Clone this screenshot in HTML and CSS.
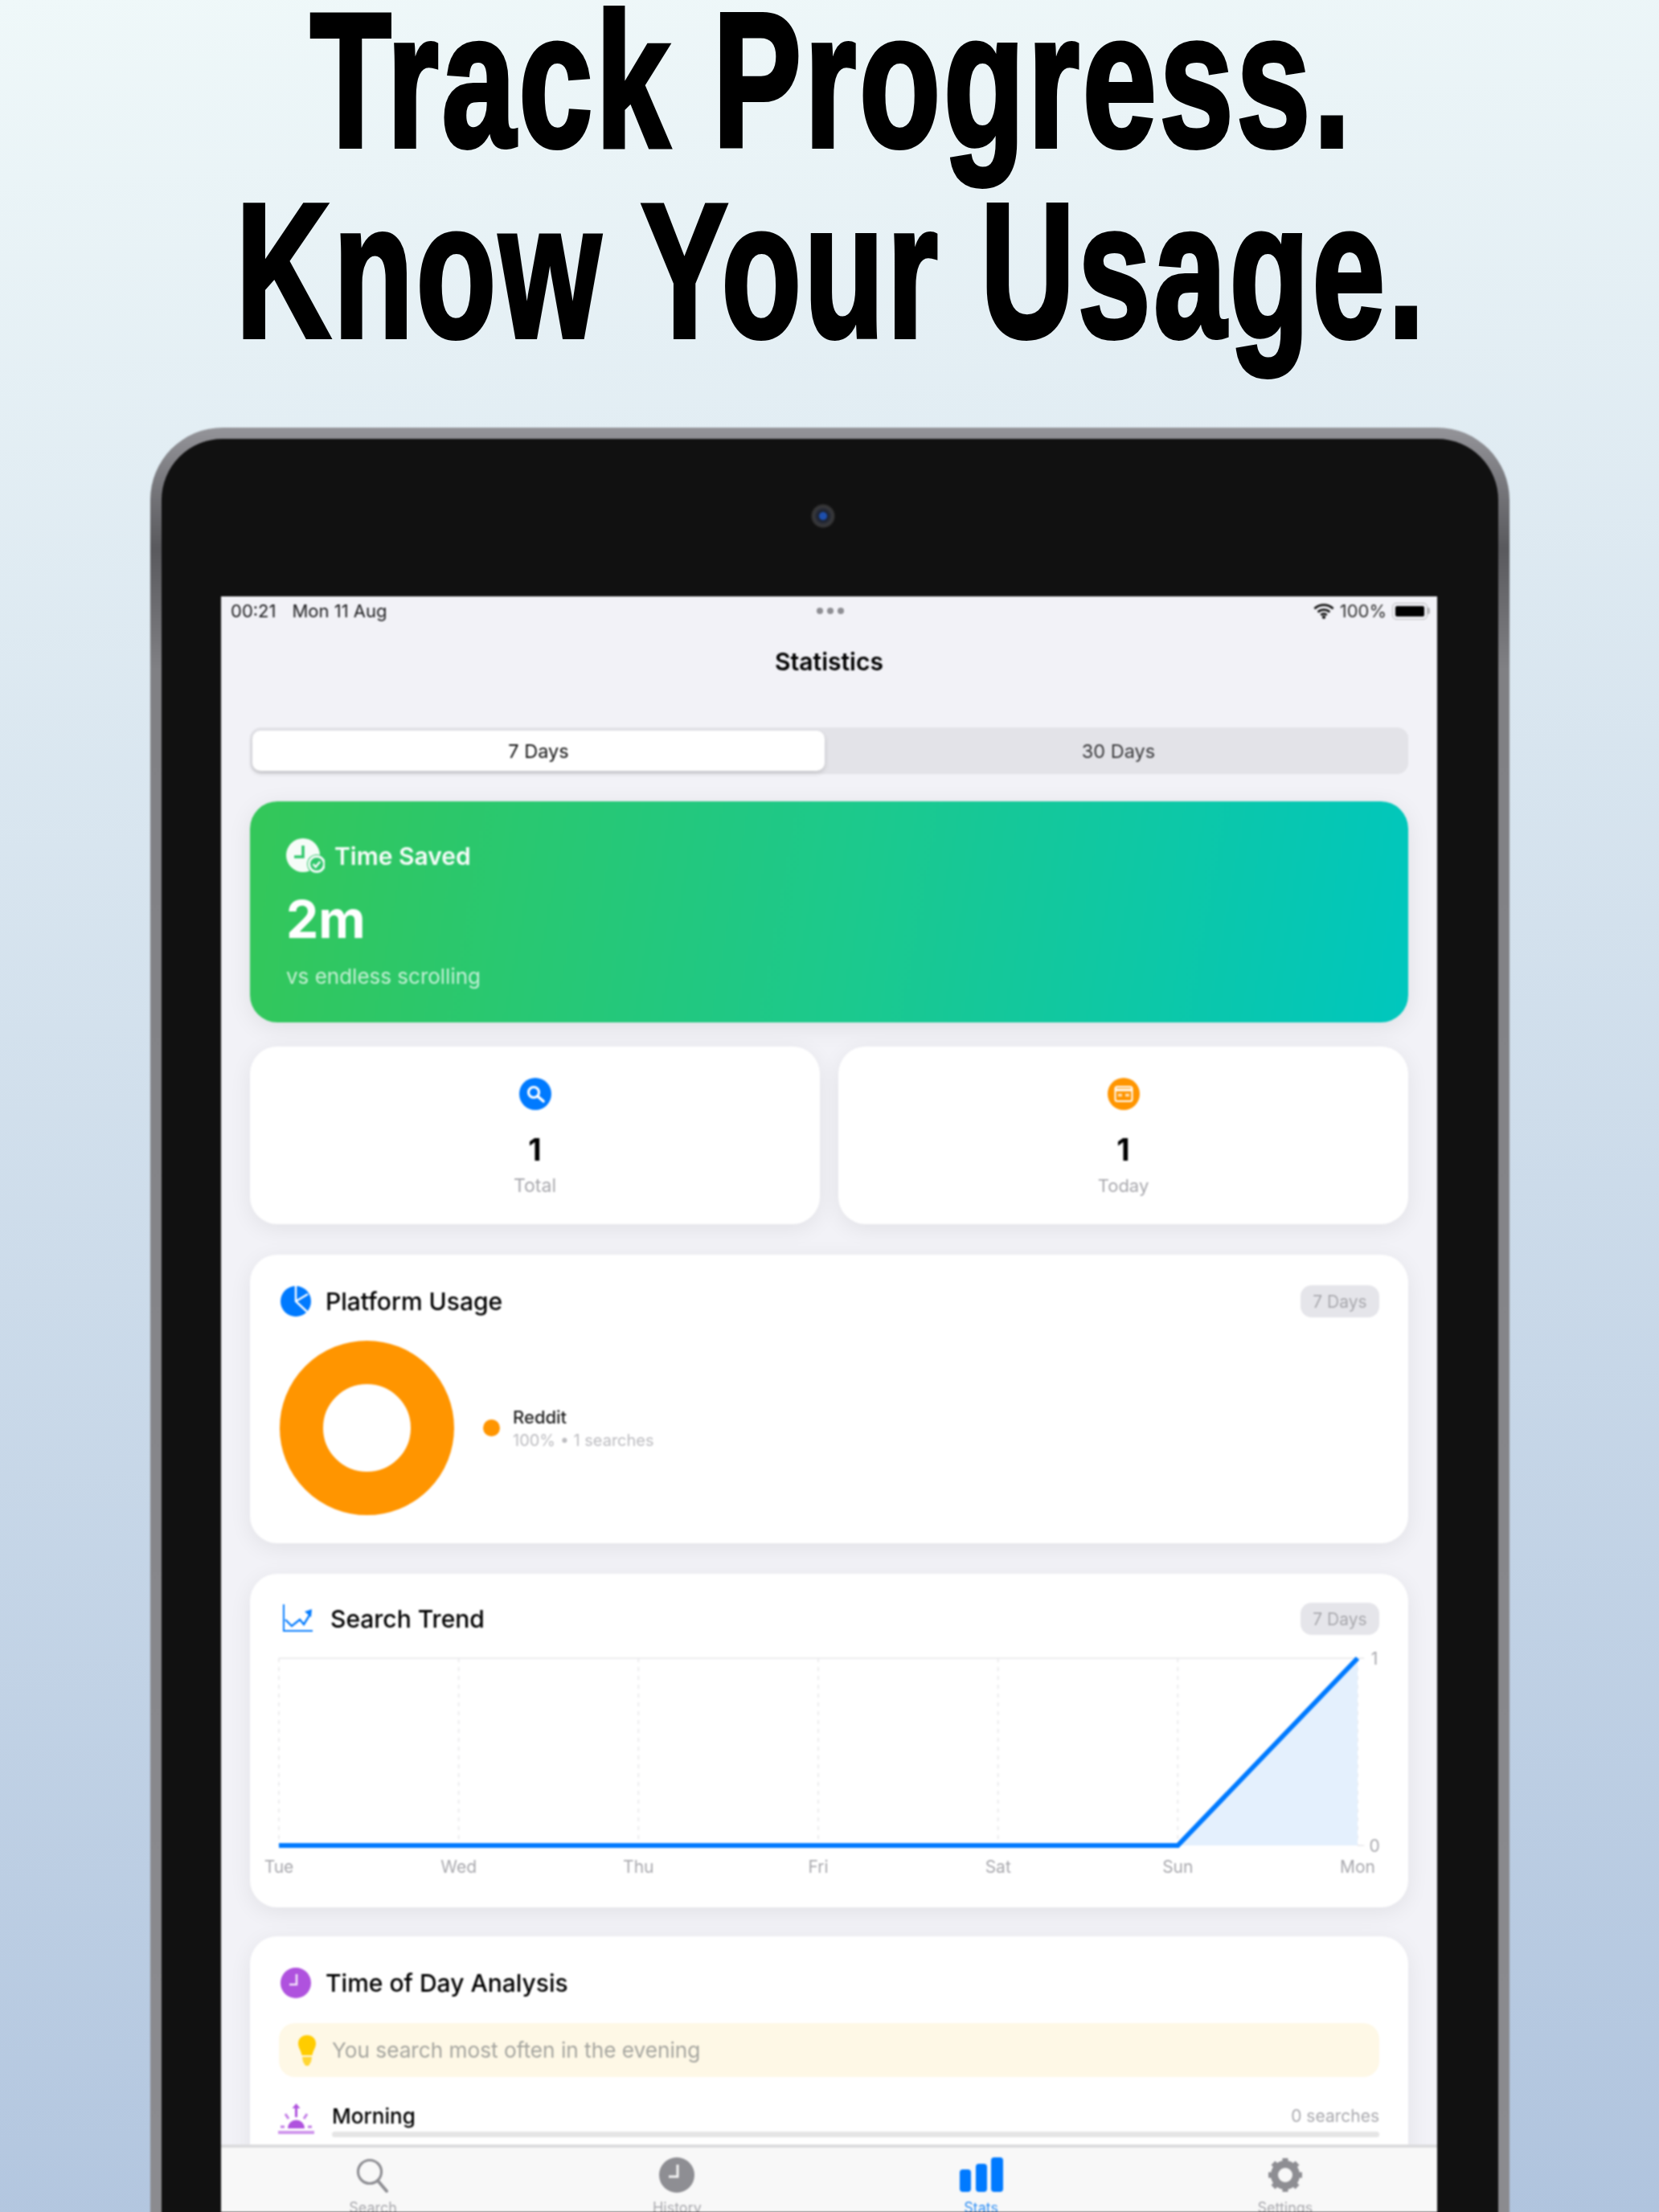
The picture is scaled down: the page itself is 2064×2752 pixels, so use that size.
FILE: index.html
```html
<!DOCTYPE html>
<html lang="en">
<head>
<meta charset="utf-8">
<title>Track Progress. Know Your Usage.</title>
<link rel="stylesheet" href="styles.css">
</head>
<body>
<main class="page">
  <h1 class="headline">
    <span class="line line-one">Track Progress.</span>
    <span class="line line-two">Know Your Usage.</span>
  </h1>
  <div class="device">
    <div class="bezel">
      <div class="camera"></div>
      <div class="screen">
        <div class="status">
          <div class="status-side"><span>00:21</span><span>Mon 11 Aug</span></div>
          <div class="dots"><i></i><i></i><i></i></div>
          <div class="status-side status-right">
            <svg class="wifi" viewBox="0 0 24 18"><path d="M1 6a16 16 0 0 1 22 0M5 10a10.500 10.500 0 0 1 14 0M8.500 13.500a5 5 0 0 1 7 0" fill="none" stroke="#111" stroke-width="2.600"/><circle cx="12" cy="16" r="2" fill="#111"/></svg>
            <span class="pct">100%</span>
            <div class="battery"><div class="battery-fill"></div></div>
            <div class="battery-tip"></div>
          </div>
        </div>
        <div class="nav">Statistics</div>
        <div class="content">
          <div class="segment">
            <div class="seg seg-on">7 Days</div>
            <div class="seg seg-off">30 Days</div>
          </div>
          <section class="saved">
            <div class="saved-head">
              <svg class="saved-icon" viewBox="0 0 48 44">
                <circle cx="21" cy="21" r="21" fill="#fff"/>
                <path d="M21 9v14H10" fill="none" stroke="#2fc86c" stroke-width="3.500"/>
                <circle cx="38" cy="32" r="12" fill="#2fc86c"/>
                <circle cx="38" cy="32" r="9.500" fill="none" stroke="#fff" stroke-width="3"/>
                <path d="M33.500 32l3.200 3.500 5.500-6.500" fill="none" stroke="#fff" stroke-width="2.500"/>
              </svg>
              <span>Time Saved</span>
            </div>
            <div class="saved-value">2m</div>
            <div class="saved-sub">vs endless scrolling</div>
          </section>
          <div class="stats">
            <section class="card stat">
              <svg class="stat-icon" viewBox="0 0 40 40"><circle cx="20" cy="20" r="20" fill="#007aff"/><circle cx="18" cy="18" r="6.500" fill="none" stroke="#fff" stroke-width="3.200"/><path d="M23 23l7 6" stroke="#fff" stroke-width="3.600" stroke-linecap="round"/></svg>
              <div class="stat-value">1</div>
              <div class="stat-label">Total</div>
            </section>
            <section class="card stat">
              <svg class="stat-icon" viewBox="0 0 40 40"><circle cx="20" cy="20" r="20" fill="#ff9500"/><rect x="9.500" y="11" width="21" height="18" rx="2.500" fill="none" stroke="#fff" stroke-width="2"/><path d="M10 15h20" stroke="#fff" stroke-width="3.200"/><path d="M13 21.500h5M22 21.500h5" stroke="#ffe0b3" stroke-width="3.500"/></svg>
              <div class="stat-value">1</div>
              <div class="stat-label stat-label-today">Today</div>
            </section>
          </div>
          <section class="card platform">
            <div class="card-head">
              <div class="title-group">
                <svg class="head-icon" viewBox="0 0 38 38"><circle cx="19" cy="19" r="19" fill="#007aff"/><path d="M19 0v19l14 13M19 19l15-9" fill="none" stroke="#fff" stroke-width="2.400"/></svg>
                <h2>Platform Usage</h2>
              </div>
              <span class="pill">7 Days</span>
            </div>
            <div class="donut-row">
              <svg class="donut" viewBox="0 0 217 217"><circle cx="108.500" cy="108.500" r="81.500" fill="none" stroke="#ff9500" stroke-width="54"/></svg>
              <div class="legend-dot"></div>
              <div class="legend">
                <div class="legend-name">Reddit</div>
                <div class="legend-meta">100% • 1 searches</div>
              </div>
            </div>
          </section>
          <section class="card trend">
            <div class="card-head trend-head">
              <div class="title-group">
                <svg class="trend-icon" viewBox="0 0 38 36"><path d="M1 0v33h36" fill="none" stroke="#007aff" stroke-width="2"/><path d="M3 19l8 8 10-8 5 6 8-13" fill="none" stroke="#007aff" stroke-width="2.400"/><path d="M27 9l9-3-1 10z" fill="#007aff"/></svg>
                <h2>Search Trend</h2>
              </div>
              <span class="pill">7 Days</span>
            </div>
            <svg class="chart" viewBox="311 2050 1441 323">
              <g stroke="#ececee" stroke-width="2" fill="none">
                <path d="M347 2064H1697M1689 2297h8"/>
                <path stroke-dasharray="5 6" d="M347 2064V2297M570.700 2064V2297M794.300 2064V2297M1018 2064V2297M1241.700 2064V2297M1465.300 2064V2297M1689 2064V2297"/>
              </g>
              <path d="M1465.300 2297L1689 2064V2297Z" fill="#e4f0fd"/>
              <path d="M347 2297H1465.300L1689 2064" fill="none" stroke="#007aff" stroke-width="6"/>
              <g class="axis" text-anchor="middle">
                <text x="347" y="2331">Tue</text>
                <text x="570.700" y="2331">Wed</text>
                <text x="794.300" y="2331">Thu</text>
                <text x="1018" y="2331">Fri</text>
                <text x="1241.700" y="2331">Sat</text>
                <text x="1465.300" y="2331">Sun</text>
                <text x="1689" y="2331">Mon</text>
                <text x="1710" y="2072">1</text>
                <text x="1710" y="2305">0</text>
              </g>
            </svg>
          </section>
          <section class="card timeday">
            <div class="title-group">
              <svg class="head-icon" viewBox="0 0 38 38"><circle cx="19" cy="19" r="19" fill="#af52de"/><path d="M20 8v13H11" fill="none" stroke="#fff" stroke-opacity=".85" stroke-width="2.600"/></svg>
              <h2>Time of Day Analysis</h2>
            </div>
            <div class="insight">
              <svg class="bulb" viewBox="0 0 22 38"><path d="M11 0c6.500 0 11 4.500 11 10.500 0 5-3.500 8.500-4.500 14.500h-13C3.500 19 0 15.500 0 10.500 0 4.500 4.500 0 11 0z" fill="#ffcc00"/><path d="M5 27h12l-1 6-3 5H9l-3-5z" fill="#ffd633"/></svg>
              <span>You search most often in the evening</span>
            </div>
            <div class="slot">
              <svg class="slot-icon" viewBox="0 0 45 40"><path d="M22.500 1l-5 6h3.500v11h3V7h3.500z" fill="#af52de"/><path d="M9 14l4 6M36 14l-4 6M3 30h5M37 30h5" stroke="#c27ce6" stroke-width="3" fill="none"/><path d="M12 32a10.500 10.500 0 0 1 21 0z" fill="#af52de"/><rect x="0" y="35" width="45" height="4" fill="#cf95ec"/></svg>
              <div class="slot-body">
                <div class="slot-line"><span class="slot-name">Morning</span><span class="slot-count">0 searches</span></div>
                <div class="slot-bar"></div>
              </div>
            </div>
          </section>
        </div>
        <nav class="tabs">
          <div class="tab">
            <svg class="tab-icon" viewBox="0 0 44 44"><circle cx="18" cy="18" r="14.500" fill="none" stroke="#8e8e93" stroke-width="3.200"/><path d="M28 29l11 13" stroke="#8e8e93" stroke-width="4" stroke-linecap="round"/></svg>
            <span>Search</span>
          </div>
          <div class="tab">
            <svg class="tab-icon" viewBox="0 0 44 44"><circle cx="22" cy="22" r="22" fill="#8e8e93"/><path d="M23 9v15H12" fill="none" stroke="#f4f4f4" stroke-width="3"/></svg>
            <span>History</span>
          </div>
          <div class="tab tab-on">
            <svg class="tab-icon tab-wide" viewBox="0 0 54 44"><rect x="0" y="15" width="14" height="28" rx="4" fill="#007aff"/><rect x="20" y="8" width="14" height="35" rx="4" fill="#007aff"/><rect x="39" y="0" width="15" height="43" rx="4" fill="#007aff"/></svg>
            <span>Stats</span>
          </div>
          <div class="tab">
            <svg class="tab-icon" viewBox="0 0 44 44"><circle cx="22" cy="22" r="13.500" fill="none" stroke="#8e8e93" stroke-width="9"/><path d="M22 1v8M22 35v8M1 22h8M35 22h8M7 7l6 6M31 31l6 6M37 7l-6 6M13 31l-6 6" stroke="#8e8e93" stroke-width="7"/></svg>
            <span>Settings</span>
          </div>
        </nav>
      </div>
    </div>
  </div>
</main>
</body>
</html>
```
FILE: styles.css
```css
* { box-sizing: border-box; margin: 0; padding: 0; }
html, body { width: 2064px; height: 2752px; overflow: hidden; }
body { font-family: Inter, "Liberation Sans", sans-serif; color: #000; }
.page {
  width: 2064px; height: 2752px; overflow: hidden;
  background: linear-gradient(176deg, #eff8f9 0%, #b0c4de 100%);
}
.headline {
  height: 457px; margin: 0 -200px; padding-left: 6px;
  font: 700 238px/238px "Liberation Sans", sans-serif;
  letter-spacing: 6px;
  -webkit-text-stroke: 6px #000;
  text-align: center;
  white-space: nowrap;
  filter: blur(.7px);
}
.line { display: block; }
.line-one { transform: scaleX(.692); line-height: 200px; margin-bottom: 18px; }
.line-two { transform: scaleX(.681); }
.device {
  width: 1691px; height: 2300px; margin: 75px 0 0 187px;
  padding: 14px 14px 0;
  border-radius: 90px 90px 0 0;
  background: linear-gradient(180deg, #949499 0, #59595d 150px, #808084 300px, #8c8c90 100%);
  filter: blur(.8px);
}
.bezel {
  height: 100%; padding: 81px 75px 0 74px;
  background: #111;
  border-radius: 76px 76px 0 0;
}
.camera {
  width: 30px; height: 30px; margin: 0 0 85px 734px;
  border-radius: 50%;
  background: radial-gradient(circle, #1d4fae 0 4px, #1a2030 6px, #3a3a3c 12px, #222 15px);
}
.screen {
  width: 1513px; height: 2010px;
  display: flex; flex-direction: column;
  background: #f2f2f7; overflow: hidden;
}
.status {
  height: 36px; flex: none; padding: 0 9px 0 12px;
  display: flex; align-items: center; justify-content: space-between;
  font-size: 22px; color: #1c1c1e;
}
.status-side { display: flex; gap: 20px; align-items: center; width: 240px; }
.status-right { justify-content: flex-end; gap: 7px; }
.dots { display: flex; gap: 5px; }
.dots i { width: 8px; height: 8px; border-radius: 50%; background: #8e8e93; display: block; }
.wifi { width: 26px; height: 19px; }
.pct { font-size: 22px; color: #333; }
.battery {
  width: 44px; height: 21px; padding: 3px;
  border: 1px solid #b5b5b8; border-radius: 5px;
}
.battery-fill { height: 100%; background: #000; border-radius: 2px; }
.battery-tip { width: 3px; height: 8px; margin-left: -7px; background: #b5b5b8; border-radius: 0 2px 2px 0; }
.nav {
  height: 90px; flex: none;
  display: flex; align-items: center; justify-content: center;
  font-size: 30px; font-weight: 600;
}
.content {
  flex: 1; min-height: 0; overflow: hidden;
  padding: 37px 36px 0;
  display: flex; flex-direction: column;
}
.segment {
  height: 58px; flex: none; padding: 4px 3px;
  display: flex; background: #e3e3e8; border-radius: 14px;
  margin-bottom: 34px;
}
.seg {
  display: flex; align-items: center; justify-content: center;
  font-size: 23.5px; color: #3a3a3c;
}
.seg-on {
  width: 712px; background: #fff; border-radius: 10px; color: #111;
  box-shadow: 0 3px 6px rgba(0,0,0,.14);
}
.seg-off { flex: 1; padding-left: 8px; }
.saved {
  height: 275px; flex: none; padding: 47px 45px 0;
  border-radius: 34px; color: #fff;
  background: linear-gradient(100deg, #34c759 0%, #1cc98d 52%, #00c7be 100%);
  box-shadow: 0 6px 30px rgba(0,0,0,.08);
  margin-bottom: 30px;
}
.saved-head { height: 42px; display: flex; align-items: center; gap: 12px; font-size: 30px; font-weight: 600; opacity: .96; }
.saved-icon { width: 48px; height: 44px; }
.saved-value { height: 76px; margin-top: 20px; font-size: 64px; line-height: 76px; font-weight: 700; }
.saved-sub { height: 36px; margin-top: 15px; font-size: 26px; line-height: 36px; color: rgba(255,255,255,.72); }
.card {
  flex: none; background: #fff; border-radius: 34px;
  box-shadow: 0 6px 28px rgba(0,0,0,.07);
}
.stats { display: grid; grid-template-columns: 709px 709px; gap: 23px; height: 221px; flex: none; margin-bottom: 38px; }
.stat { display: flex; flex-direction: column; align-items: center; padding-top: 39px; }
.stat-icon { width: 40px; height: 40px; }
.stat-value { height: 46px; margin-top: 26px; font-size: 38px; line-height: 46px; font-weight: 700; }
.stat-label { height: 30px; margin-top: 7px; font-size: 23px; line-height: 30px; color: #a9a9ae; }
.stat-label-today { font-size: 22px; }
.card-head { display: flex; align-items: center; justify-content: space-between; height: 40px; }
.title-group { display: flex; align-items: center; gap: 18px; height: 40px; padding-left: 2px; }
.title-group h2 { font-size: 30px; font-weight: 500; line-height: 40px; }
.head-icon { width: 38px; height: 38px; }
.pill {
  height: 40px; width: 98px; border-radius: 14px;
  display: flex; align-items: center; justify-content: center;
  background: #e5e5ea; color: #a8a8ad; font-size: 21px;
}
.platform { height: 359px; padding: 38px 36px 36px; margin-bottom: 38px; }
.donut-row { display: flex; align-items: center; margin-top: 29px; padding-left: 1px; }
.donut { width: 217px; height: 217px; }
.legend-dot { width: 21px; height: 21px; margin: 0 16px 0 36px; border-radius: 50%; background: #ff9500; }
.legend-name { font-size: 22px; line-height: 30px; font-weight: 500; color: #222; }
.legend-meta { font-size: 20px; line-height: 28px; color: #bcbcc0; }
.trend { height: 415px; padding-top: 36px; margin-bottom: 36px; }
.trend-head { margin: 0 36px; }
.trend-icon { width: 38px; height: 36px; margin-left: 3px; }
.trend .title-group { gap: 21px; }
.chart { display: block; width: 1441px; height: 323px; margin-top: 15px; }
.axis { font-size: 21px; fill: #a8a8ad; }
.timeday { height: 400px; padding: 38px 36px 0; }
.insight {
  height: 67px; margin-top: 30px; padding-left: 24px;
  display: flex; align-items: center; gap: 20px;
  background: #fef8e6; border-radius: 20px;
  font-size: 26.2px; color: #a5a59f;
}
.bulb { width: 22px; height: 38px; }
.slot { display: flex; gap: 22px; margin-top: 32px; margin-left: -1px; }
.slot-icon { width: 45px; height: 40px; flex: none; }
.slot-body { flex: 1; }
.slot-line { height: 32px; display: flex; align-items: center; justify-content: space-between; }
.slot-name { font-size: 26px; font-weight: 500; }
.slot-count { font-size: 21px; color: #a9a9ae; }
.slot-bar { height: 7px; margin-top: 4px; background: #e5e5e5; border-radius: 4px; }
.tabs {
  height: 84px; flex: none; padding-top: 12px;
  display: grid; grid-template-columns: repeat(4, 1fr);
  background: #f8f8f8; border-top: 4px solid #dcdcde;
}
.tab { display: flex; flex-direction: column; align-items: center; font-size: 18px; color: #a8a8ad; }
.tab span { margin-top: 8px; line-height: 22px; }
.tab-icon { width: 44px; height: 44px; flex: none; }
.tab-wide { width: 54px; }
.tab-on { color: #2f8ff5; }
```
